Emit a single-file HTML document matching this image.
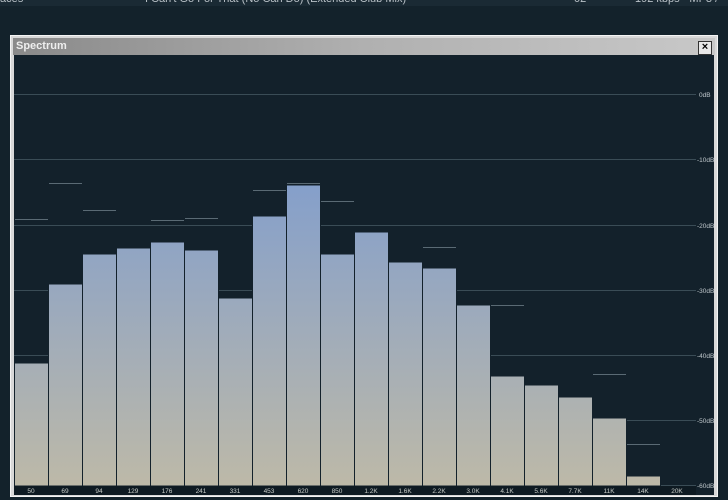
<!DOCTYPE html>
<html><head><style>
body{margin:0;width:728px;height:500px;background:#13222b;overflow:hidden;font-family:"Liberation Sans",sans-serif;position:relative}
.top{position:absolute;left:0;top:0;width:728px;height:6px;background:#1a2a34;overflow:hidden}
.top span{position:absolute;top:-7px;font-size:11px;color:#b8c0c6}
.win{position:absolute;left:10px;top:35px;width:708px;height:462px;background:#d8d8d8;border:1px solid #f4f4f4;box-sizing:border-box}
.title{position:absolute;left:2px;top:2px;right:2px;height:17px;background:linear-gradient(90deg,#8a8a8a,#b0b0b0 50%,#c8c8c8);color:#eee;font-size:11px;font-weight:bold;line-height:17px;padding-left:3px}
.x{position:absolute;right:3px;top:3px;width:12px;height:12px;background:#e8e8e8;border:1px solid #333;font-size:11px;line-height:11px;text-align:center;color:#000;font-weight:bold}
svg{position:absolute;left:14px;top:55px}
</style></head><body>
<div class="top"><span style="left:0">aces</span><span style="left:145px">I Can't Go For That (No Can Do) (Extended Club Mix)</span><span style="left:574px">02</span><span style="left:635px">192 kbps · MP3 / Con</span></div>
<div class="win"><div class="title">Spectrum<div class="x">×</div></div></div>
<svg width="700" height="440" viewBox="14 55 700 440" font-family="Liberation Sans" font-size="7" fill="#b8c4cc">
<defs><linearGradient id="g" gradientUnits="userSpaceOnUse" x1="0" y1="180" x2="0" y2="486"><stop offset="0" stop-color="#849fcb"/><stop offset="1" stop-color="#bdb9a8"/></linearGradient></defs>
<rect x="14" y="55" width="700" height="440" fill="#13212b"/>
<g stroke="#3a4c56" stroke-width="1">
<line x1="14" y1="94.5" x2="696" y2="94.5"/><line x1="14" y1="159.5" x2="696" y2="159.5"/><line x1="14" y1="225.5" x2="696" y2="225.5"/><line x1="14" y1="290.5" x2="696" y2="290.5"/><line x1="14" y1="355.5" x2="696" y2="355.5"/><line x1="14" y1="420.5" x2="696" y2="420.5"/><line x1="14" y1="485.5" x2="696" y2="485.5"/>
</g>
<g font-size="6.5" fill="#c0c8cc"><text x="699" y="97">0dB</text><text x="697" y="162">-10dB</text><text x="697" y="228">-20dB</text><text x="697" y="293">-30dB</text><text x="697" y="358">-40dB</text><text x="697" y="423">-50dB</text><text x="697" y="488">-60dB</text></g>
<g fill="url(#g)" stroke="#13212b" stroke-width="1">
<rect x="14.5" y="363" width="34" height="123"/>
<rect x="48.5" y="284" width="34" height="202"/>
<rect x="82.5" y="254" width="34" height="232"/>
<rect x="116.5" y="248" width="34" height="238"/>
<rect x="150.5" y="242" width="34" height="244"/>
<rect x="184.5" y="250" width="34" height="236"/>
<rect x="218.5" y="298" width="34" height="188"/>
<rect x="252.5" y="216" width="34" height="270"/>
<rect x="286.5" y="185" width="34" height="301"/>
<rect x="320.5" y="254" width="34" height="232"/>
<rect x="354.5" y="232" width="34" height="254"/>
<rect x="388.5" y="262" width="34" height="224"/>
<rect x="422.5" y="268" width="34" height="218"/>
<rect x="456.5" y="305" width="34" height="181"/>
<rect x="490.5" y="376" width="34" height="110"/>
<rect x="524.5" y="385" width="34" height="101"/>
<rect x="558.5" y="397" width="34" height="89"/>
<rect x="592.5" y="418" width="34" height="68"/>
<rect x="626.5" y="476" width="34" height="10"/>
</g>
<g stroke="#5a6a74" stroke-width="1">
<line x1="15" y1="219.5" x2="48" y2="219.5"/><line x1="49" y1="183.5" x2="82" y2="183.5"/><line x1="83" y1="210.5" x2="116" y2="210.5"/><line x1="151" y1="220.5" x2="184" y2="220.5"/><line x1="185" y1="218.5" x2="218" y2="218.5"/><line x1="253" y1="190.5" x2="286" y2="190.5"/><line x1="287" y1="183.5" x2="320" y2="183.5"/><line x1="321" y1="201.5" x2="354" y2="201.5"/><line x1="423" y1="247.5" x2="456" y2="247.5"/><line x1="491" y1="305.5" x2="524" y2="305.5"/><line x1="593" y1="374.5" x2="626" y2="374.5"/><line x1="627" y1="444.5" x2="660" y2="444.5"/>
</g>
<rect x="14" y="486" width="682" height="9" fill="#0e1a22"/>
<g font-size="6.5" fill="#c8ccc8" text-anchor="middle">
<text x="31" y="493">50</text><text x="65" y="493">69</text><text x="99" y="493">94</text><text x="133" y="493">129</text><text x="167" y="493">176</text><text x="201" y="493">241</text><text x="235" y="493">331</text><text x="269" y="493">453</text><text x="303" y="493">620</text><text x="337" y="493">850</text><text x="371" y="493">1.2K</text><text x="405" y="493">1.6K</text><text x="439" y="493">2.2K</text><text x="473" y="493">3.0K</text><text x="507" y="493">4.1K</text><text x="541" y="493">5.6K</text><text x="575" y="493">7.7K</text><text x="609" y="493">11K</text><text x="643" y="493">14K</text><text x="677" y="493">20K</text>
</g>
</svg>
</body></html>
